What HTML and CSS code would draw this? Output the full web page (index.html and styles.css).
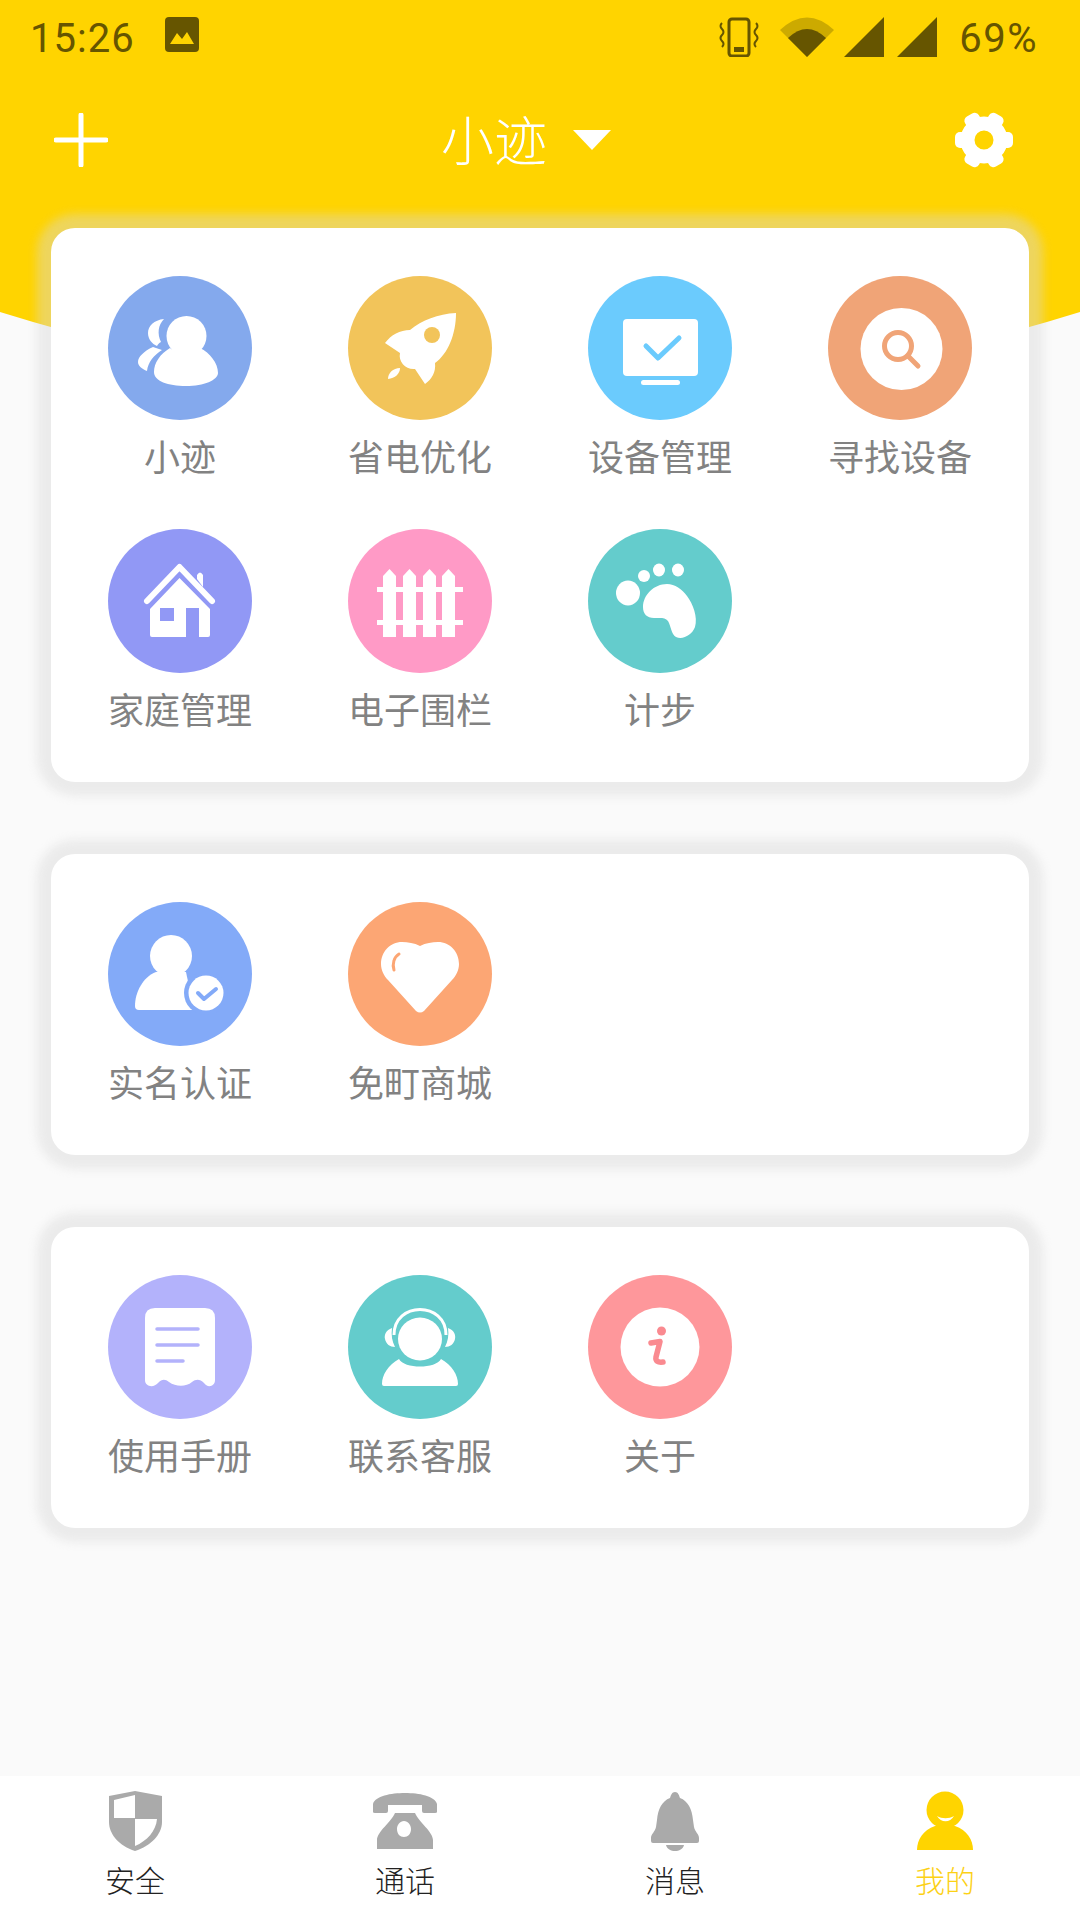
FILE: index.html
```html
<!DOCTYPE html>
<html lang="zh">
<head>
    <meta charset="UTF-8">
    <meta name="viewport" content="width=device-width, initial-scale=1.0">
    <title>我的</title>
    <link rel="stylesheet" href="styles.css">
</head>
<body>
    <header class="header">
        <div class="status">
            <div class="status-left">
                <span class="time">15:26</span>
                <svg class="photo" width="34" height="36" viewBox="0 0 34 36"><rect width="34" height="35" rx="4" fill="#665500"/><path d="M5 27 L12 16 L17 22 L22 15 L29 27 Z" fill="#ffd400"/></svg>
            </div>
            <div class="status-right">
                <svg width="40" height="40" viewBox="0 0 40 40" fill="none" stroke="#665500"><rect x="10" y="2" width="20" height="37" rx="3" stroke-width="3"/><rect x="15" y="30" width="10" height="5" fill="#665500" stroke="none"/><path d="M3 6 Q0 9 3 12 Q6 15 3 18 Q0 21 3 24 Q6 27 3 30 M37 6 Q40 9 37 12 Q34 15 37 18 Q40 21 37 24 Q34 27 37 30" stroke-width="2"/></svg>
                <svg class="wifi" width="54" height="40" viewBox="0 0 54 40"><path d="M0 13 Q27 -12 54 13 L27 40 Z" fill="#ccaa00"/><path d="M8 21 Q27 3 46 21 L27 40 Z" fill="#665500"/></svg>
                <svg class="signal" width="40" height="40" viewBox="0 0 40 40"><path d="M40 0 V40 H0 Z" fill="#665500"/></svg>
                <svg class="signal" width="40" height="40" viewBox="0 0 40 40"><path d="M40 0 V40 H0 Z" fill="#665500"/></svg>
                <span class="battery">69%</span>
            </div>
        </div>
        <div class="toolbar">
            <svg width="54" height="54" viewBox="0 0 54 54"><path d="M27 2 V52 M2 27 H52" stroke="#fff" stroke-width="5" stroke-linecap="round"/></svg>
            <div class="title">
                <span class="title-text">小迹</span>
                <svg width="38" height="20" viewBox="0 0 38 20"><path d="M0 0 H38 L19 20 Z" fill="#fff"/></svg>
            </div>
            <svg width="60" height="60" viewBox="0 0 60 60">
                <g transform="translate(30 30)" fill="#fff">
                    <circle r="16.500" fill="none" stroke="#fff" stroke-width="14"/>
                    <rect x="16" y="-8" width="13" height="16" rx="5"/>
                    <rect x="16" y="-8" width="13" height="16" rx="5" transform="rotate(60)"/>
                    <rect x="16" y="-8" width="13" height="16" rx="5" transform="rotate(120)"/>
                    <rect x="16" y="-8" width="13" height="16" rx="5" transform="rotate(180)"/>
                    <rect x="16" y="-8" width="13" height="16" rx="5" transform="rotate(240)"/>
                    <rect x="16" y="-8" width="13" height="16" rx="5" transform="rotate(300)"/>
                </g>
            </svg>
        </div>
    </header>

    <main class="content">
        <section class="card">
            <div class="item">
                <div class="ico c-blue">
                    <svg viewBox="0 0 144 144" fill="#fff">
                        <circle cx="78.500" cy="60" r="20"/>
                        <path d="M62 72 C52 78 46 87 46 96 C46 105 60 110 78 110 C96 110 110 104 110 97 C110 87 102 77 92 72 C84 80 72 80 62 72 Z"/>
                        <path d="M56 43 C46 44 40 50 40 57 C40 63 44 68 49 70 C50 68 51 67 53 66 C49 58 50 49 56 43 Z"/>
                        <path d="M45 71 C36 75 30 81 30 86 C30 90 34 93 39 95 C40 86 46 79 54 74 Z"/>
                    </svg>
                </div>
                <span class="label">小迹</span>
            </div>
            <div class="item">
                <div class="ico c-yellow">
                    <svg viewBox="0 0 144 144" fill="#fff">
                        <path d="M108 37 C90 38 74 44 62 54 C52 54 43 59 37 67 L52 77 C50 86 58 94 67 93 L77 108 C84 103 88 96 87 87 C100 78 108 58 108 37 Z"/>
                        <circle cx="84" cy="59" r="8" fill="#f2c45a"/>
                        <path d="M40 103 C40 97 45 92 52 92 C52 98 47 102 40 103 Z"/>
                    </svg>
                </div>
                <span class="label">省电优化</span>
            </div>
            <div class="item">
                <div class="ico c-sky">
                    <svg viewBox="0 0 144 144" fill="#fff">
                        <rect x="35" y="43" width="75" height="57" rx="4"/>
                        <rect x="53" y="104" width="39" height="5" rx="2.500"/>
                        <path d="M58 70 L70 82 L91 62" fill="none" stroke="#6bcbfd" stroke-width="5" stroke-linecap="round" stroke-linejoin="round"/>
                    </svg>
                </div>
                <span class="label">设备管理</span>
            </div>
            <div class="item">
                <div class="ico c-orange">
                    <svg viewBox="0 0 144 144">
                        <circle cx="73.500" cy="73" r="41" fill="#fff"/>
                        <circle cx="70" cy="70" r="13.500" fill="none" stroke="#f0a477" stroke-width="5"/>
                        <path d="M80 80 L90 90" stroke="#f0a477" stroke-width="5" stroke-linecap="round"/>
                    </svg>
                </div>
                <span class="label">寻找设备</span>
            </div>
            <div class="item">
                <div class="ico c-purple">
                    <svg viewBox="0 0 144 144" fill="#fff">
                        <path d="M39 72 L71.500 38 L104 72" fill="none" stroke="#fff" stroke-width="6" stroke-linecap="round" stroke-linejoin="round"/>
                        <path d="M89 50 V46 Q92 41 95 46 V58 Z"/>
                        <path d="M71.500 49 L102 80 V106 Q102 108 100 108 H91 V79 H78 V108 H44 Q42 108 42 106 V80 Z M52 79 V92 H66 V79 Z" fill-rule="evenodd"/>
                    </svg>
                </div>
                <span class="label">家庭管理</span>
            </div>
            <div class="item">
                <div class="ico c-pink">
                    <svg viewBox="0 0 144 144" fill="#fff">
                        <path d="M35 108 V47 L41.500 40 L48 47 V108 Z"/>
                        <path d="M55 108 V47 L61.500 40 L68 47 V108 Z"/>
                        <path d="M75 108 V47 L81.500 40 L88 47 V108 Z"/>
                        <path d="M94 108 V47 L100.500 40 L107 47 V108 Z"/>
                        <rect x="29" y="58" width="86" height="5"/>
                        <rect x="29" y="91" width="86" height="5"/>
                    </svg>
                </div>
                <span class="label">电子围栏</span>
            </div>
            <div class="item">
                <div class="ico c-teal">
                    <svg viewBox="0 0 144 144" fill="#fff">
                        <ellipse cx="40" cy="64" rx="12" ry="12.500"/>
                        <ellipse cx="56" cy="47" rx="6" ry="6"/>
                        <ellipse cx="71" cy="41" rx="6" ry="6.500"/>
                        <ellipse cx="90" cy="41" rx="6" ry="6.500"/>
                        <path d="M79 55 C66 55 55 66 55 78 C55 85 59 89 66 89 C72 89 77 88 80 92 C83 97 83 105 88 108 C95 111 104 106 107 98 C110 88 105 75 99 67 C94 60 87 55 79 55 Z"/>
                    </svg>
                </div>
                <span class="label">计步</span>
            </div>
        </section>

        <section class="card">
            <div class="item">
                <div class="ico c-blue2">
                    <svg viewBox="0 0 144 144" fill="#fff">
                        <circle cx="63" cy="54" r="21"/>
                        <path d="M48 70 C35 75 27 90 27 104 Q27 108 31 108 H86 L78 70 Z"/>
                        <circle cx="98" cy="91" r="22" fill="#83aaf8"/>
                        <circle cx="98" cy="91" r="17.500"/>
                        <path d="M90 91 L96 97 L108 87" fill="none" stroke="#83aaf8" stroke-width="4" stroke-linecap="round" stroke-linejoin="round"/>
                    </svg>
                </div>
                <span class="label">实名认证</span>
            </div>
            <div class="item">
                <div class="ico c-peach">
                    <svg viewBox="0 0 144 144" fill="#fff">
                        <path d="M72 44 C66 41 60 40 54 40 C42 40 33 50 33 62 C33 68 36 74 40 78 L68 109 Q72 112 76 109 L104 78 C108 74 111 68 111 62 C111 50 102 40 90 40 C84 40 78 41 72 44 Z"/>
                        <path d="M51 52 C46 55 44 62 46 68" fill="none" stroke="#fca674" stroke-width="3" stroke-linecap="round"/>
                    </svg>
                </div>
                <span class="label">免町商城</span>
            </div>
        </section>

        <section class="card">
            <div class="item">
                <div class="ico c-lavender">
                    <svg viewBox="0 0 144 144" fill="#fff">
                        <path d="M47 33 H97 Q107 33 107 43 V105 C107 112 99 113 96 108 C92 104 88 104 84 107 C78 112 68 112 61 107 C57 104 54 104 50 108 C46 113 37 112 37 105 V43 Q37 33 47 33 Z"/>
                        <path d="M49 54 H90 M49 70 H90 M49 86 H75" stroke="#b3b2fb" stroke-width="3.500" stroke-linecap="round"/>
                    </svg>
                </div>
                <span class="label">使用手册</span>
            </div>
            <div class="item">
                <div class="ico c-teal">
                    <svg viewBox="0 0 144 144" fill="#fff">
                        <ellipse cx="72" cy="64" rx="22" ry="21.500"/>
                        <path d="M46 60 C46 26 98 26 98 60" fill="none" stroke="#fff" stroke-width="3"/>
                        <path d="M44 53 C38 55 36 60 37 64 C38 69 42 72 47 72 C44 66 43 60 44 53 Z"/>
                        <path d="M100 53 C106 55 108 60 107 64 C106 69 102 72 97 72 C100 66 101 60 100 53 Z"/>
                        <path d="M51 84 C40 90 34 100 34 109 Q34 111 36 111 H108 Q110 111 110 109 C110 100 104 90 93 84 C88 94 56 94 51 84 Z"/>
                    </svg>
                </div>
                <span class="label">联系客服</span>
            </div>
            <div class="item">
                <div class="ico c-red">
                    <svg viewBox="0 0 144 144">
                        <circle cx="72" cy="72" r="39.500" fill="#fff"/>
                        <circle cx="73.500" cy="56" r="4.500" fill="#fa8a90"/>
                        <path d="M63 68 L72 66.500 L68 82 Q67 88 75 87" fill="none" stroke="#fa8a90" stroke-width="5.500" stroke-linecap="round" stroke-linejoin="round"/>
                    </svg>
                </div>
                <span class="label">关于</span>
            </div>
        </section>
    </main>

    <nav class="tabbar">
        <div class="tab">
            <svg viewBox="0 0 64 64">
                <path d="M32 1 L59 6 V32 C59 44 48 56 32 61 C16 56 6 44 6 32 V6 Z" fill="#aaa"/>
                <path d="M32 5 V28 H11 V10 Z M32 29 H54 C53 41 44 51 32 56 Z" fill="#fff"/>
            </svg>
            <span>安全</span>
        </div>
        <div class="tab">
            <svg viewBox="0 0 64 64" fill="#aaa">
                <path d="M0 22 V14 C2 6 18 3 32 3 C46 3 62 6 64 14 V22 Q64 23 62 23 H51 Q49 23 49 21 V15 H15 V21 Q15 23 13 23 H2 Q0 23 0 22 Z"/>
                <path fill-rule="evenodd" d="M22 23 H42 C46 32 60 42 60 50 V59 H4 V50 C4 42 18 32 22 23 Z M31 31 C27 31 24 35 24 39 C24 44 27 47 31 47 C35 47 38 44 38 39 C38 35 35 31 31 31 Z"/>
            </svg>
            <span>通话</span>
        </div>
        <div class="tab">
            <svg viewBox="0 0 64 64" fill="#aaa">
                <path d="M32 2 C35 2 36 5 37 8 C45 11 49 19 50 30 L51 37 C52 42 56 44 56 48 V51 Q56 53 54 53 H10 Q8 53 8 51 V48 C8 44 12 42 13 37 L14 30 C15 19 19 11 27 8 C28 5 29 2 32 2 Z"/>
                <path d="M23 55 H41 C40 59 36 61 32 61 C28 61 24 59 23 55 Z"/>
            </svg>
            <span>消息</span>
        </div>
        <div class="tab active">
            <svg viewBox="0 0 64 64">
                <circle cx="32" cy="20" r="18.500" fill="#ffd400"/>
                <path d="M22 36 C10 40 4 50 4 60 H60 C60 50 54 40 42 36 Z" fill="#ffd400"/>
                <path d="M24 26 C28 33 37 33 41 26 C36 29 29 29 24 26 Z" fill="#fff"/>
            </svg>
            <span>我的</span>
        </div>
    </nav>
</body>
</html>
```

FILE: styles.css
```css
* {
    box-sizing: border-box;
}
body {
    font-family: "Noto Sans CJK SC", Roboto, sans-serif;
    background-color: #fafafa;
    display: flex;
    flex-direction: column;
    height: 1920px;
    margin: 0;
    overflow: hidden;
}
.header {
    height: 480px;
    margin-bottom: -252px;
    background-color: #ffd400;
    clip-path: path("M0 0 H1080 V312 Q540 480 0 312 Z");
}
.status {
    height: 72px;
    padding: 19px 42px 0 30px;
    display: flex;
    justify-content: space-between;
    align-items: flex-start;
    color: #665500;
    font-family: Roboto, sans-serif;
    font-size: 40px;
    line-height: 40px;
}
.status-left {
    display: flex;
    align-items: flex-start;
}
.time {
    letter-spacing: 1px;
}
.photo {
    margin-left: 30px;
    margin-top: -2px;
}
.status-right {
    display: flex;
    align-items: flex-start;
    margin-top: -2px;
}
.wifi {
    margin-left: 21px;
}
.signal {
    margin-left: 10px;
}
.signal + .signal {
    margin-left: 13px;
}
.battery {
    margin-left: 22px;
    margin-top: 2px;
    letter-spacing: 1.5px;
}
.toolbar {
    height: 136px;
    padding: 0 66px 0 54px;
    display: flex;
    justify-content: space-between;
    align-items: center;
    color: #fff;
}
.title {
    display: flex;
    align-items: center;
    gap: 26px;
    margin-right: 10px;
    font-size: 53px;
    font-weight: 300;
    line-height: 60px;
}
.title-text {
    margin-bottom: 4px;
}
.content {
    flex: 1;
    position: relative;
    padding: 0 51px;
    display: flex;
    flex-direction: column;
    gap: 72px;
}
.card {
    padding: 48px 9px 0;
    display: grid;
    grid-template-columns: repeat(4, 240px);
    grid-auto-rows: 253px;
    background-color: #fff;
    border-radius: 24px;
    box-shadow: 0 0 10px 14px rgba(215, 215, 215, 0.43);
}
.item {
    display: flex;
    flex-direction: column;
    align-items: center;
}
.ico {
    width: 144px;
    height: 144px;
    border-radius: 50%;
}
.ico svg {
    display: block;
    width: 144px;
    height: 144px;
}
.label {
    margin-top: 10px;
    color: #828282;
    font-size: 36px;
    line-height: 50px;
}
.c-blue { background-color: #84a9ed; }
.c-yellow { background-color: #f2c45a; }
.c-sky { background-color: #6bcbfd; }
.c-orange { background-color: #f0a477; }
.c-purple { background-color: #9198f5; }
.c-pink { background-color: #ff9ac6; }
.c-teal { background-color: #64cccc; }
.c-blue2 { background-color: #83aaf8; }
.c-peach { background-color: #fca674; }
.c-lavender { background-color: #b3b2fb; }
.c-red { background-color: #fe979b; }
.tabbar {
    height: 144px;
    display: grid;
    grid-template-columns: repeat(4, 1fr);
    background-color: #fff;
}
.tab {
    padding-top: 14px;
    display: flex;
    flex-direction: column;
    align-items: center;
    color: #222;
    font-size: 30px;
    font-weight: 300;
    line-height: 40px;
}
.tab svg {
    display: block;
    width: 64px;
    height: 64px;
    margin-bottom: 5px;
}
.tab.active {
    color: #fcd116;
}
```
